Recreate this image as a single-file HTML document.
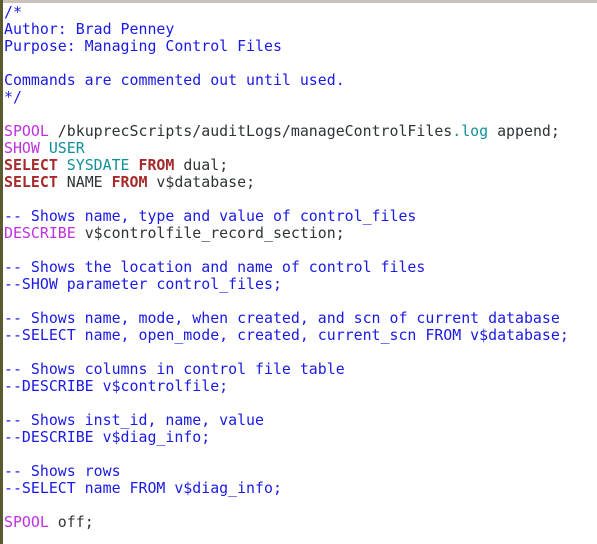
<!DOCTYPE html>
<html><head><meta charset="utf-8"><style>
html,body{margin:0;padding:0;background:#fff;width:597px;height:544px;overflow:hidden}
.top{position:absolute;left:0;top:0;width:597px;height:3px;background:#cbc3bb}
.left{position:absolute;left:0;top:0;width:3px;height:544px;background:#5a5a30}
pre{position:absolute;left:4px;top:4px;margin:0;font-family:"DejaVu Sans Mono","Liberation Mono",monospace;font-size:14.9px;line-height:17px;color:#2e3436}
.c{color:#1a1ae6}.k{color:#c030e0}.t{color:#10909a}.r{color:#a52a2a;font-weight:bold}
</style></head><body><div class="top"></div><div class="left"></div><pre><span class="c">/*
Author: Brad Penney
Purpose: Managing Control Files

Commands are commented out until used.
*/</span>

<span class="k">SPOOL</span> /bkuprecScripts/auditLogs/manageControlFiles<span class="t">.log</span> append;
<span class="k">SHOW</span> <span class="t">USER</span>
<span class="r">SELECT</span> <span class="t">SYSDATE</span> <span class="r">FROM</span> dual;
<span class="r">SELECT</span> NAME <span class="r">FROM</span> v$database;

<span class="c">-- Shows name, type and value of control_files</span>
<span class="k">DESCRIBE</span> v$controlfile_record_section;

<span class="c">-- Shows the location and name of control files
--SHOW parameter control_files;

-- Shows name, mode, when created, and scn of current database
--SELECT name, open_mode, created, current_scn FROM v$database;

-- Shows columns in control file table
--DESCRIBE v$controlfile;

-- Shows inst_id, name, value
--DESCRIBE v$diag_info;

-- Shows rows
--SELECT name FROM v$diag_info;</span>

<span class="k">SPOOL</span> off;
</pre></body></html>
